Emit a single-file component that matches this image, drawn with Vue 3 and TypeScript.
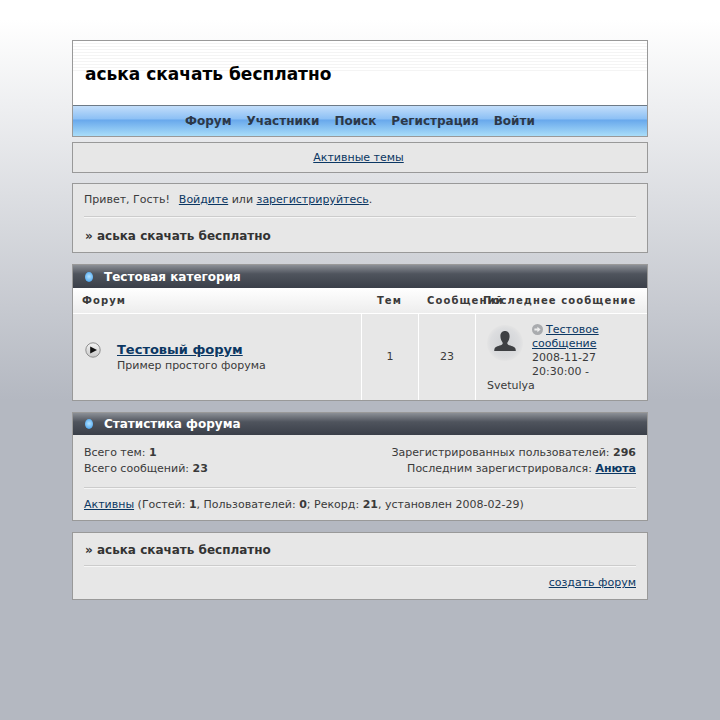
<script setup lang="ts">
const nav: string[] = ['Форум', 'Участники', 'Поиск', 'Регистрация', 'Войти']
</script>

<template>
  <div class="page">
    <div class="head">
      <div class="logo"><h1>аська скачать бесплатно</h1></div>
      <nav class="nav"><a v-for="n in nav" :key="n">{{ n }}</a></nav>
    </div>
    <div class="box active"><a class="lnk">Активные темы</a></div>
    <div class="box welcome">
      <p class="hello">Привет, Гость!<a class="lnk login">Войдите</a> или <a class="lnk">зарегистрируйтесь</a>.</p>
      <hr />
      <p class="crumb">» аська скачать бесплатно</p>
    </div>
    <section class="box cat">
      <h2 class="bar"><i class="dot"></i>Тестовая категория</h2>
      <div class="thead">
        <div class="c1">Форум</div>
        <div class="c2">Тем</div>
        <div class="c3">Сообщений</div>
        <div class="c4">Последнее сообщение</div>
      </div>
      <div class="row">
        <div class="c1 forum">
          <svg class="ficon" width="16" height="16" viewBox="0 0 16 16">
            <defs>
              <linearGradient id="fi" x1="0" y1="0" x2="0" y2="1">
                <stop offset="0" stop-color="#f4f4f4" />
                <stop offset="1" stop-color="#c8c8c8" />
              </linearGradient>
            </defs>
            <circle cx="8" cy="8" r="7.2" fill="url(#fi)" stroke="#8f8f8f" />
            <path d="M5.2 4.4 L12 8 L5.2 11.6 Z" fill="#111" />
          </svg>
          <div class="ftext">
            <a class="ftitle">Тестовый форум</a>
            <div>Пример простого форума</div>
          </div>
        </div>
        <div class="c2 num">1</div>
        <div class="c3 num">23</div>
        <div class="c4 last">
          <svg class="avatar" width="36" height="36" viewBox="0 0 36 36">
            <defs>
              <radialGradient id="av">
                <stop offset="0" stop-color="#d0d2d5" />
                <stop offset="0.8" stop-color="#dcdddf" />
                <stop offset="1" stop-color="#e4e4e4" />
              </radialGradient>
            </defs>
            <circle cx="18" cy="18" r="18" fill="url(#av)" />
            <path d="M18 6c3 0 4.6 2.2 4.6 5.2 0 2.6-1 4.6-2 6-.6.9-.4 2 .6 2.6 2.8 1.3 6.4 1.8 7.2 3.6.3.7.4 1.5.4 2.6H7.2c0-1.1.1-1.9.4-2.6.8-1.8 4.4-2.3 7.2-3.6 1-.6 1.2-1.7.6-2.6-1-1.4-2-3.4-2-6C13.4 8.2 15 6 18 6z" fill="#3e4043" />
          </svg>
          <svg class="go" width="11" height="11" viewBox="0 0 11 11">
            <circle cx="5.5" cy="5.5" r="5.5" fill="#a9abae" />
            <path d="M2.4 4.6h3V2.8l3.2 2.7-3.2 2.7V6.4h-3z" fill="#eee" />
          </svg>
          <a class="lnk">Тестовое сообщение</a><br />2008-11-27 20:30:00 - Svetulya
        </div>
      </div>
    </section>
    <section class="box stats">
      <h2 class="bar short"><i class="dot"></i>Статистика форума</h2>
      <div class="sbody">
        <div class="scols">
          <div>
            <div>Всего тем: <b>1</b></div>
            <div>Всего сообщений: <b>23</b></div>
          </div>
          <div class="right">
            <div>Зарегистрированных пользователей: <b>296</b></div>
            <div>Последним зарегистрировался: <a class="lnk strong">Анюта</a></div>
          </div>
        </div>
        <hr />
        <div class="online"><a class="lnk">Активны</a> (Гостей: <b>1</b>, Пользователей: <b>0</b>; Рекорд: <b>21</b>, установлен 2008-02-29)</div>
      </div>
    </section>
    <div class="box foot">
      <p class="crumb">» аська скачать бесплатно</p>
      <hr />
      <div class="create"><a class="lnk">создать форум</a></div>
    </div>
  </div>
</template>

<style>
html, body { margin: 0; min-height: 720px; }
body { background: linear-gradient(#ffffff 20px, #b4b8c1 400px, #b4b8c1 100%) no-repeat; background-color: #b4b8c1; }
</style>

<style scoped>
.page {
  width: 576px;
  margin: 0 auto;
  padding-top: 40px;
  font: 11px/14px "DejaVu Sans", sans-serif;
  color: #3a3a3a;
}
.head { border: 1px solid #999; box-sizing: border-box; height: 97px; background: #fff; }
.logo {
  height: 65px;
  box-sizing: border-box;
  background: repeating-linear-gradient(#f4f4f4 0 1px, #fff 1px 3px) 0 2px / 100% 30px no-repeat;
  display: flex;
  align-items: center;
  padding: 2px 0 0 12px;
  border-bottom: 1px solid #6d7a87;
}
.logo h1 { margin: 0; font-size: 17px; line-height: 22px; color: #000; }
.nav {
  height: 30px;
  box-sizing: border-box;
  background: linear-gradient(#c3defa 0, #8cc0f5 13px, #68a8ec 14px, #a9ddf9 100%);
  display: flex;
  justify-content: center;
  align-items: center;
  gap: 15px;
  font-weight: bold;
  font-size: 12px;
  color: #2c3848;
}
.box { border: 1px solid #999; background: #e7e7e7; box-sizing: border-box; }
.active { margin-top: 5px; height: 31px; padding-right: 3px; display: flex; justify-content: center; align-items: center; }
.lnk { color: #0b3763; text-decoration: underline; }
.login { margin-left: 9px; }
.welcome { margin-top: 10px; height: 70px; padding: 9px 11px 0; }
p { margin: 0; }
.hello { height: 14px; }
hr { border: 0; height: 2px; background: linear-gradient(#ccc 0 1px, #f6f6f6 1px); margin: 0; }
.welcome hr { margin-top: 9px; }
.crumb { font-weight: bold; font-size: 12px; line-height: 16px; padding-left: 1px; color: #333; }
.welcome .crumb { margin-top: 10px; }
.cat { margin-top: 11px; height: 137px; }
.bar {
  margin: 0;
  height: 23px;
  box-sizing: border-box;
  background: linear-gradient(#8b8f96 0, #4f545d 9px, #3a3f49 100%);
  color: #fff;
  font-size: 12px;
  line-height: 21px;
  font-weight: bold;
  display: flex;
  align-items: center;
  padding: 1px 0 0 12px;
}
.short { height: 22px; padding-top: 0; }
.dot {
  width: 8px;
  height: 10px;
  border-radius: 50%;
  background: radial-gradient(circle at 50% 45%, #b4e2ff, #5aaef2 70%, #2f74b8);
  margin-right: 11px;
  flex: none;
}
.thead {
  display: flex;
  height: 26px;
  background: linear-gradient(#fff, #ededed);
  border-bottom: 1px solid #fff;
  box-sizing: border-box;
  font-size: 10px;
  font-weight: bold;
  letter-spacing: 1.1px;
  line-height: 25px;
  white-space: nowrap;
}
.c1 { width: 288px; box-sizing: border-box; padding-left: 9px; }
.c2 { width: 57px; box-sizing: border-box; text-align: center; }
.c3 { width: 57px; box-sizing: border-box; text-align: center; }
.c4 { width: 172px; box-sizing: border-box; text-align: center; }
.thead .c3 { text-align: left; padding-left: 9px; }
.thead .c4 { text-align: left; padding-left: 8px; }
.row { display: flex; height: 86px; }
.row > div { height: 86px; }
.row .c2, .row .c3, .row .c4 { border-left: 1px solid #fff; }
.num { display: flex; align-items: center; justify-content: center; }
.forum { display: flex; align-items: center; padding-left: 12px; }
.ficon { flex: none; margin: 0 16px 0 0; position: relative; top: -7px; }
.ftitle {
  display: block;
  font-size: 13px;
  line-height: 17px;
  margin-bottom: 1px;
  font-weight: bold;
  color: #0b3763;
  text-decoration: underline;
}
.row .last { text-align: left; padding: 9px 30px 0 11px; }
.avatar { float: left; margin: 2px 9px 8px 0; }
.go { vertical-align: -2px; margin-right: 3px; }
.stats { margin-top: 11px; height: 109px; }
.sbody { padding: 10px 11px 0; }
.scols { display: flex; justify-content: space-between; line-height: 16px; }
.right { text-align: right; }
.strong { font-weight: bold; }
.sbody hr { margin-top: 10px; }
.online { margin-top: 9px; }
.foot { margin-top: 11px; height: 68px; padding: 9px 11px 0; }
.foot hr { margin-top: 7px; }
.create { text-align: right; margin-top: 9px; }
</style>
